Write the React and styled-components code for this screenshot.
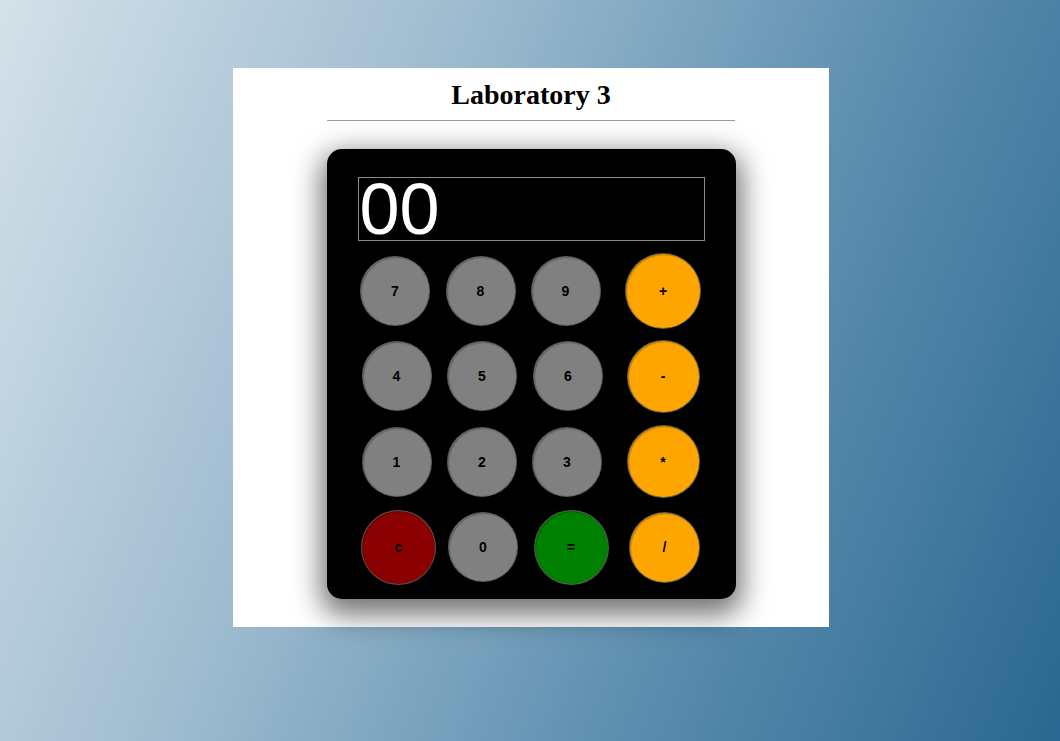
import React from "react";
import styled, { createGlobalStyle } from "styled-components";

const GlobalStyle = createGlobalStyle`
  html, body {
    margin: 0;
    padding: 0;
    height: 100%;
  }
  body {
    background: linear-gradient(112deg, #d4e1e9 0%, #9dbbcf 35%, #5b8dae 68%, #2a6790 100%);
    background-attachment: fixed;
    min-height: 741px;
    font-family: "Liberation Serif", "Times New Roman", serif;
  }
`;

const Page = styled.div`
  display: flex;
  justify-content: center;
  padding: 68px 0 0 2px;
`;

const Panel = styled.main`
  width: 596px;
  background: #ffffff;
  display: flex;
  justify-content: center;
  padding-bottom: 28px;
`;

const Column = styled.div`
  width: 409px;
  display: flex;
  flex-direction: column;
`;

const Title = styled.h1`
  margin: 0;
  height: 52px;
  line-height: 54px;
  font-family: "Liberation Serif", "Times New Roman", serif;
  font-weight: bold;
  font-size: 28px;
  text-align: center;
  color: #000;
`;

const Rule = styled.hr`
  width: 408px;
  margin: 0 0 28px 0;
  border: none;
  border-top: 1px solid #9a9a9a;
`;

const Calculator = styled.div`
  background: #000;
  border-radius: 15px;
  box-shadow: 0 10px 28px 6px rgba(0, 0, 0, 0.55);
  padding: 28px 19px 9px 26px;
  display: flex;
  flex-direction: column;
`;

const Display = styled.div`
  margin-left: 5px;
  width: 344px;
  height: 62px;
  border: 1px solid #8a8a8a;
  color: #fff;
  font-family: "Liberation Sans", Arial, sans-serif;
  font-size: 72px;
  line-height: 62px;
  padding-left: 1px;
  margin-bottom: 7px;
`;

const Keys = styled.div`
  display: grid;
  grid-template-columns: 86px 86px 86px 106px;
  grid-auto-rows: 85.5px;
  align-items: center;
  justify-items: center;
`;

const palette = {
  num: "#808080",
  op: "#ffa500",
  clear: "#8b0000",
  eq: "#008000",
};

const Key = styled.button`
  width: ${(p) => p.$size}px;
  height: ${(p) => p.$size}px;
  border-radius: 50%;
  border: 1px solid rgba(90, 90, 90, 0.9);
  background: ${(p) => palette[p.$kind]};
  color: #000;
  font-family: "Liberation Sans", Arial, sans-serif;
  font-weight: bold;
  font-size: 14px;
  padding: 0;
  margin-left: ${(p) => p.$shift || 0}px;
  cursor: pointer;
  box-shadow: inset 1px 1px 1px rgba(0, 0, 0, 0.25);
`;

const rows = [
  [
    { l: "7", k: "num", s: 70, x: -1 },
    { l: "8", k: "num", s: 70, x: -2 },
    { l: "9", k: "num", s: 70, x: -4 },
    { l: "+", k: "op", s: 76, x: -1 },
  ],
  [
    { l: "4", k: "num", s: 70, x: 2 },
    { l: "5", k: "num", s: 70, x: 1 },
    { l: "6", k: "num", s: 70, x: 1 },
    { l: "-", k: "op", s: 73, x: -1 },
  ],
  [
    { l: "1", k: "num", s: 70, x: 2 },
    { l: "2", k: "num", s: 70, x: 1 },
    { l: "3", k: "num", s: 70, x: -1 },
    { l: "*", k: "op", s: 73, x: -1 },
  ],
  [
    { l: "c", k: "clear", s: 75, x: 6 },
    { l: "0", k: "num", s: 70, x: 3 },
    { l: "=", k: "eq", s: 75, x: 7 },
    { l: "/", k: "op", s: 71, x: 2 },
  ],
];

export default function App() {
  return (
    <>
      <GlobalStyle />
      <Page>
        <Panel>
          <Column>
            <Title>Laboratory 3</Title>
            <Rule />
            <Calculator>
              <Display>00</Display>
              <Keys>
                {rows.flat().map((b) => (
                  <Key key={b.l} $kind={b.k} $size={b.s} $shift={b.x}>
                    {b.l}
                  </Key>
                ))}
              </Keys>
            </Calculator>
          </Column>
        </Panel>
      </Page>
    </>
  );
}
